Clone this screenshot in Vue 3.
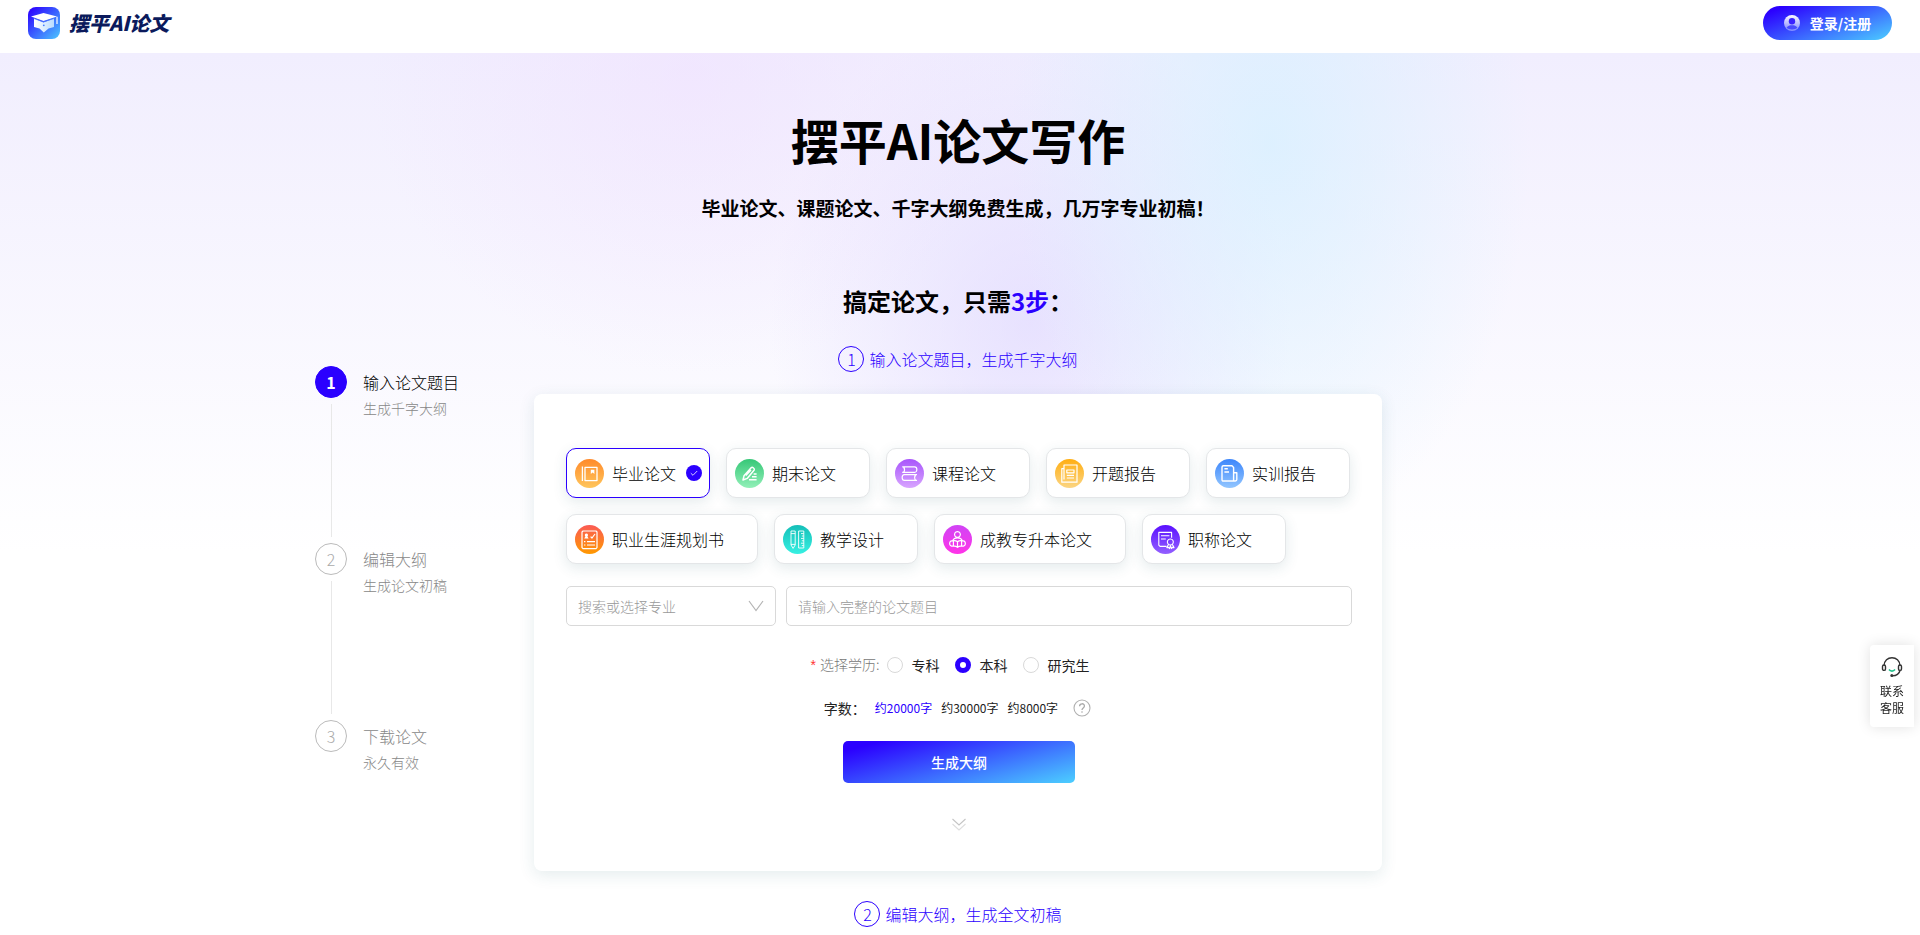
<template>
  <div class="page">
    <header class="header">
      <a class="logo" href="#">
        <svg class="logo-icon" viewBox="0 0 32 32" aria-hidden="true">
          <defs>
            <linearGradient id="logoBg" x1="0" y1="0" x2="1" y2="1">
              <stop offset="0.1" stop-color="#2d0bff" />
              <stop offset="1" stop-color="#4cc8ff" />
            </linearGradient>
            <linearGradient id="logoCap" x1="0" y1="0" x2="1" y2="0">
              <stop offset="0" stop-color="#fff" />
              <stop offset="1" stop-color="#b9dcff" />
            </linearGradient>
          </defs>
          <rect width="32" height="32" rx="8" fill="url(#logoBg)" />
          <path d="M6 11.5 L15.5 15.6 L26 11.5 V20 L20.5 21.6 L15.8 25.5 L11.5 21.6 L6 20 Z" fill="url(#logoCap)" />
          <path d="M3 9.6 L15.5 6 L29 9.6 L15.5 14 Z" fill="#fff" />
          <path d="M5.6 11.4 L15.5 14.8 L26.4 11.4" fill="none" stroke="#4a7dff" stroke-width="0.7" />
          <path d="M29 9.8 V17" stroke="#fff" stroke-width="1.2" />
          <circle cx="15.8" cy="18.3" r="0.9" fill="#3f7bff" />
        </svg>
        <span class="logo-text">摆平AI论文</span>
      </a>
      <button class="login" type="button">
        <svg width="16" height="16" viewBox="0 0 16 16" aria-hidden="true">
          <defs>
            <linearGradient id="userBg" x1="0" y1="0" x2="0" y2="1">
              <stop offset="0" stop-color="#fff" />
              <stop offset="1" stop-color="#fff" stop-opacity="0.35" />
            </linearGradient>
          </defs>
          <circle cx="8" cy="8" r="8" fill="url(#userBg)" />
          <circle cx="8" cy="6.3" r="3.2" fill="#3a22ff" />
          <path d="M2.6 12.8 C4 10.6 5.6 10.2 8 10.2 S12 10.6 13.4 12.8 C11 15 5 15 2.6 12.8 Z" fill="#4a4bff" />
        </svg>
        <span>登录/注册</span>
      </button>
    </header>

    <main class="main">
      <h1>摆平AI论文写作</h1>
      <p class="subtitle">毕业论文、课题论文、千字大纲免费生成，几万字专业初稿！</p>
      <h2>搞定论文，只需<span class="blue">3步</span>：</h2>

      <div class="columns">
        <ol class="steps">
          <li v-for="(step, index) in steps" :key="index" class="step" :class="{ active: index === 0 }">
            <div class="step-side">
              <span class="step-num">{{ index + 1 }}</span>
              <span v-if="index < steps.length - 1" class="step-line"></span>
            </div>
            <div>
              <div class="step-title">{{ step.title }}</div>
              <div class="step-desc">{{ step.desc }}</div>
            </div>
          </li>
        </ol>

        <div class="content">
          <h3><span class="num">1</span>输入论文题目，生成千字大纲</h3>

          <form class="card" @submit.prevent>
            <div class="types">
              <button
                v-for="(item, index) in types"
                :key="item.name"
                type="button"
                class="type"
                :class="{ selected: index === currentType }"
                @click="currentType = index"
              >
                <svg class="type-icon" viewBox="0 0 29 29" aria-hidden="true">
                  <defs>
                    <linearGradient :id="'type' + index" x1="0" y1="0" x2="0" y2="1">
                      <stop offset="0" :stop-color="item.from" />
                      <stop offset="1" :stop-color="item.to" />
                    </linearGradient>
                  </defs>
                  <circle cx="14.5" cy="14.5" r="14.5" :fill="'url(#type' + index + ')'" />
                  <path :d="item.path" fill="none" stroke="#fff" :stroke-width="item.stroke" stroke-linejoin="round" />
                  <path v-if="item.solid" :d="item.solid" fill="#fff" />
                </svg>
                <span>{{ item.name }}</span>
                <svg v-if="index === currentType" class="check" viewBox="0 0 16 16" aria-hidden="true">
                  <circle cx="8" cy="8" r="8" fill="#2b00ff" />
                  <path d="M4.8 8.2 L7 10.3 L11.2 6" fill="none" stroke="#fff" stroke-width="0.8" />
                </svg>
              </button>
            </div>

            <div class="fields">
              <div class="select-box">
                <select v-model="major" aria-label="专业">
                  <option value="">搜索或选择专业</option>
                </select>
                <svg class="arrow" viewBox="0 0 16 12" aria-hidden="true">
                  <path d="M1 1 L8 10.5 L15 1" fill="none" stroke="#b4b4b4" stroke-width="1.2" />
                </svg>
              </div>
              <input v-model="title" class="title-input" type="text" placeholder="请输入完整的论文题目" aria-label="论文题目">
            </div>

            <div class="degree" role="radiogroup" aria-labelledby="degree-label">
              <span id="degree-label" class="degree-label"><span class="star">*</span>选择学历:</span>
              <label v-for="item in degrees" :key="item" class="radio">
                <input v-model="degree" type="radio" name="degree" :value="item">
                <span>{{ item }}</span>
              </label>
            </div>

            <div class="words">
              <span class="words-label">字数：</span>
              <button
                v-for="item in words"
                :key="item"
                type="button"
                class="word"
                :class="{ blue: item === word }"
                @click="word = item"
              >{{ item }}</button>
              <button type="button" class="help" aria-label="帮助">
                <svg width="18" height="18" viewBox="0 0 18 18" aria-hidden="true">
                  <circle cx="9" cy="9" r="8" fill="none" stroke="#b0b0b0" stroke-width="1.1" />
                  <path d="M6.6 7.2 C6.6 4 11.4 4 11.4 7 C11.4 9 9 8.9 9 11" fill="none" stroke="#a8a8a8" stroke-width="1.3" />
                  <circle cx="9" cy="13" r="0.8" fill="#a8a8a8" />
                </svg>
              </button>
            </div>

            <button class="submit" type="submit">生成大纲</button>

            <svg class="more" viewBox="0 0 14 14" aria-hidden="true">
              <path d="M0.5 1 L7 7 L13.5 1" fill="none" stroke="#c4c4c4" stroke-width="1.1" />
              <path d="M0.5 6 L7 12 L13.5 6" fill="none" stroke="#dedede" stroke-width="1.1" />
            </svg>
          </form>

          <h3><span class="num">2</span>编辑大纲，生成全文初稿</h3>
        </div>
      </div>
    </main>

    <a class="service" href="#">
      <svg width="22" height="22" viewBox="0 0 22 22" fill="none" aria-hidden="true">
        <path d="M3 10 C3 -1 19 -1 19 10" stroke="#333" stroke-width="1.4" />
        <rect x="1.5" y="9" width="3" height="5.4" rx="1.5" stroke="#333" stroke-width="1.4" />
        <rect x="17.5" y="9" width="3" height="5.4" rx="1.5" stroke="#333" stroke-width="1.4" />
        <path d="M19 14.5 C18 18.5 15 19.8 11.5 19.8" stroke="#333" stroke-width="1.4" />
        <circle cx="10.8" cy="19.6" r="1.5" fill="#333" />
        <path d="M8 13.6 C9.5 15.6 12.5 15.6 14 13.6" stroke="#1fc08a" stroke-width="1.6" />
      </svg>
      <span>联系<br>客服</span>
    </a>
  </div>
</template>

<script setup>
import { ref } from 'vue'

const currentType = ref(0)
const major = ref('')
const title = ref('')
const degree = ref('本科')
const word = ref('约20000字')

const degrees = ['专科', '本科', '研究生']
const words = ['约20000字', '约30000字', '约8000字']

const steps = [
  { title: '输入论文题目', desc: '生成千字大纲' },
  { title: '编辑大纲', desc: '生成论文初稿' },
  { title: '下载论文', desc: '永久有效' }
]

// path = outline strokes, solid = filled parts, both in a 29x29 box
const types = [
  {
    name: '毕业论文', from: '#ff8a2b', to: '#ffc65c', stroke: 1.3,
    path: 'M7.4 7.6 V22 M10 8.4 H22 V21.6 H10 Z',
    solid: 'M15.8 10.8 H19.4 V15 L17.6 13.4 L15.8 15 Z'
  },
  {
    name: '期末论文', from: '#36c777', to: '#92f0b8', stroke: 1.5,
    path: 'M8 21 L9 16.8 L16.4 8.6 C17.4 7.6 20 9.8 19.2 11 L12.2 19.4 Z M10.8 16.6 L16 11 M14 20.8 H21.6 M17 17.8 H21.6 M18.6 15 H21.6'
  },
  {
    name: '课程论文', from: '#a855fb', to: '#d8a5ff', stroke: 1.2,
    path: 'M7.2 7.8 H19.6 C22.6 7.8 22.6 13.4 19.6 13.4 H7.2 M8.6 7.8 C9.8 9.6 9.8 11.6 8.6 13.4 M22 15.6 H9.4 C6.4 15.6 6.4 21.4 9.4 21.4 H22 M20.6 15.6 C19.4 17.4 19.4 19.6 20.6 21.4'
  },
  {
    name: '开题报告', from: '#ffae12', to: '#fbd583', stroke: 1.2,
    path: 'M9 6 H22 V23.2 H6.8 V9.6 H9 Z M9 9.6 V20.6 M11.8 11 H19 V13.8 H11.8 Z M11.8 16.4 H19 M11.8 19 H19'
  },
  {
    name: '实训报告', from: '#3d86fb', to: '#92c6ff', stroke: 1.4,
    path: 'M8.4 6.8 H17 L18.6 8.4 V22 H8.4 C7.4 22 7 21.6 7 20.6 V8.2 C7 7.2 7.4 6.8 8.4 6.8 Z M18.6 13.8 H21.8 V20.6 C21.8 21.6 21.4 22 20.4 22 H18.6 M9.4 9.8 H12.8 M9.4 13 H14'
  },
  {
    name: '职业生涯规划书', from: '#fb5a55', to: '#ff9a00', stroke: 1.2,
    path: 'M8 6 H21 L22 7 V22.6 L21 23.6 H8 L7 22.6 V7 Z M15.6 11.6 L17 13 L20 9 M12 16.6 H20 M12 20 H20 M9 16.6 H10.4 M9 20 H10.4',
    solid: 'M11.4 8.4 A1.7 1.7 0 0 1 12.4 11.4 L13.6 13.4 H9.2 L10.4 11.4 A1.7 1.7 0 0 1 11.4 8.4 Z'
  },
  {
    name: '教学设计', from: '#15bfb8', to: '#37f0e2', stroke: 0.9,
    path: 'M8 6 H12.2 V20 L10.1 23.4 L8 20 Z M8 8.6 H12.2 M8 19.4 H12.2 M15.6 6 H20.8 V23 H15.6 Z M18 8.6 H20.8 M18.8 11 H20.8 M18 13.4 H20.8 M18.8 15.8 H20.8 M18 18.2 H20.8 M18.8 20.6 H20.8'
  },
  {
    name: '成教专升本论文', from: '#d044f5', to: '#ff33e8', stroke: 1.2,
    path: 'M14.5 6.6 A2.9 2.9 0 1 1 14.4 6.6 Z M9.8 15.4 C10.6 13.4 12.4 12.8 14.5 12.8 S18.4 13.4 19.2 15.4 M14.5 16.8 V22.4 M10.4 15.6 C12 15.4 13.6 16 14.5 16.8 C15.4 16 17 15.4 18.6 15.6 V21.2 C17 21 15.4 21.6 14.5 22.4 C13.6 21.6 12 21 10.4 21.2 Z M10.4 15.6 C5.4 15.6 5.4 21.2 10.4 21.2 M18.6 15.6 C23.6 15.6 23.6 21.2 18.6 21.2'
  },
  {
    name: '职称论文', from: '#5a10ff', to: '#9360ff', stroke: 1.1,
    path: 'M15.4 21.4 H9 L7.8 20.2 V7.4 H20.6 V12.8 M10 10.8 H18.4 M10 14 H14.8 M19.4 14 A3 3 0 1 1 19.3 14 Z M17.4 19.4 L15.8 22.6 L17.8 22.4 L18.6 23.6 L19.4 20.6 L20.4 23.6 L21.2 22.4 L23 22.6 L21.4 19.4'
  }
]
</script>

<style>
body {
  margin: 0;
}
</style>

<style scoped>
* {
  box-sizing: border-box;
}
.page {
  font-family: "Noto Sans CJK SC", "Noto Sans", sans-serif;
  font-size: 14px;
  color: #222;
  min-height: 100vh;
  background: #fff;
}
button, input, select {
  font-family: inherit;
  margin: 0;
}
button {
  cursor: pointer;
}
.blue {
  color: #2b00ff;
}

/* header */
.header {
  height: 53px;
  padding: 6px 28px 13px;
  display: flex;
  justify-content: space-between;
  align-items: center;
}
.logo {
  display: flex;
  align-items: center;
  gap: 9px;
  text-decoration: none;
}
.logo-icon {
  width: 32px;
  height: 32px;
}
.logo-text {
  font-size: 20px;
  line-height: 32px;
  font-weight: 900;
  font-style: italic;
  color: #0b1a5c;
}
.login {
  width: 129px;
  height: 34px;
  border: none;
  border-radius: 17px;
  background: linear-gradient(160deg, #2b00ff 10%, #4ccfff 100%);
  color: #fff;
  font-size: 14px;
  font-weight: bold;
  display: flex;
  align-items: center;
  justify-content: center;
  gap: 10px;
}

/* main */
.main {
  padding: 52px 4px 0 0;
  background:
    radial-gradient(320px 300px at 690px 20px, rgba(240, 224, 255, 0.55), rgba(240, 224, 255, 0)),
    radial-gradient(260px 400px at 1270px 90px, rgba(214, 240, 255, 0.75), rgba(214, 240, 255, 0)),
    radial-gradient(260px 320px at 1030px 270px, rgba(222, 214, 255, 0.65), rgba(222, 214, 255, 0)),
    linear-gradient(180deg, #f1eefe 0, #fff 500px);
  text-align: center;
}
h1 {
  margin: 0;
  font-size: 48px;
  line-height: 68px;
  color: #000;
}
.subtitle {
  margin: 21px 0 0;
  font-size: 19px;
  line-height: 28px;
  font-weight: bold;
  color: #000;
}
h2 {
  margin: 62px 0 0;
  font-size: 24px;
  line-height: 34px;
  color: #000;
}
h3 {
  margin: 0;
  display: flex;
  align-items: center;
  justify-content: center;
  gap: 5px;
  font-size: 16px;
  line-height: 26px;
  font-weight: 300;
  color: #2b00ff;
}
.num {
  width: 26px;
  height: 26px;
  line-height: 24px;
  border: 1px solid #2b00ff;
  border-radius: 50%;
}
.columns {
  margin-top: 28px;
  display: grid;
  grid-template-columns: 1fr minmax(0, 848px) 1fr;
}

/* left steps */
.steps {
  list-style: none;
  margin: 20px 0 0;
  padding: 0;
  width: 219px;
  justify-self: end;
  text-align: left;
}
.step {
  display: flex;
  gap: 16px;
  height: 177px;
  color: #888;
}
.step-side {
  display: flex;
  flex-direction: column;
  align-items: center;
}
.step-num {
  width: 32px;
  height: 32px;
  border: 1px solid #bbb;
  border-radius: 50%;
  font-size: 16px;
  line-height: 30px;
  font-weight: 300;
  text-align: center;
  color: #aaa;
}
.step-line {
  flex: 1;
  width: 1px;
  margin: 6px 0;
  background: #e8e8e8;
}
.step-title {
  font-size: 16px;
  line-height: 32px;
  font-weight: 300;
}
.step-desc {
  font-size: 14px;
  line-height: 20px;
  font-weight: 300;
}
.active .step-num {
  background: #2b00ff;
  border-color: #2b00ff;
  color: #fff;
  font-weight: bold;
}
.active .step-title {
  color: #000;
}

/* card */
.card {
  margin: 22px 0 30px;
  padding: 54px 30px 39px 32px;
  background: #fff;
  border-radius: 8px;
  box-shadow: 0 4px 16px rgba(30, 100, 110, 0.12);
  display: flex;
  flex-direction: column;
  align-items: center;
}
.types {
  width: 100%;
  display: flex;
  flex-wrap: wrap;
  gap: 16px;
}
.type {
  position: relative;
  height: 50px;
  padding: 0 33px 0 8px;
  border: 1px solid #e4e6e8;
  border-radius: 10px;
  background: #fff;
  box-shadow: 0 4px 14px rgba(30, 90, 100, 0.12);
  display: flex;
  align-items: center;
  gap: 8px;
  font-size: 16px;
  font-weight: 300;
  color: #000;
}
.type.selected {
  border-color: #2b00ff;
}
.type-icon {
  width: 29px;
  height: 29px;
}
.check {
  position: absolute;
  right: 7px;
  width: 16px;
  height: 16px;
}
.fields {
  width: 100%;
  margin-top: 22px;
  display: flex;
  gap: 10px;
}
.select-box {
  position: relative;
  flex: 0 0 210px;
}
select, .title-input {
  width: 100%;
  height: 40px;
  padding: 0 11px;
  border: 1px solid #d9d9d9;
  border-radius: 5px;
  background: #fff;
  font-size: 14px;
  font-weight: 300;
  color: #999;
}
select {
  appearance: none;
}
.title-input {
  flex: 1;
  min-width: 0;
  color: #222;
}
.title-input::placeholder {
  color: #999;
}
.arrow {
  position: absolute;
  right: 12px;
  top: 14px;
  width: 16px;
  height: 12px;
  pointer-events: none;
}
.degree {
  margin-top: 26px;
  padding-right: 18px;
  display: flex;
  align-items: center;
  gap: 16px;
  line-height: 24px;
}
.degree-label {
  margin-right: -8px;
  font-weight: 300;
  color: #777;
}
.star {
  margin-right: 4px;
  font-family: "Liberation Sans", sans-serif;
  font-weight: 400;
  color: #f33;
}
.radio {
  display: flex;
  align-items: center;
  gap: 8px;
}
.radio input {
  appearance: none;
  width: 16px;
  height: 16px;
  border: 1px solid #d9d9d9;
  border-radius: 50%;
  background: #fff;
}
.radio input:checked {
  border: 5px solid #2b00ff;
}
.words {
  margin-top: 20px;
  padding-right: 3px;
  display: flex;
  align-items: center;
  gap: 9px;
  line-height: 22px;
}
.word {
  padding: 0;
  border: none;
  background: none;
  font-size: 12px;
  line-height: 22px;
}
.word:not(.blue) {
  color: #222;
}
.help {
  margin-left: 6px;
  padding: 0;
  border: none;
  background: none;
  height: 18px;
  line-height: 0;
}
.submit {
  width: 232px;
  height: 42px;
  margin-top: 22px;
  border: none;
  border-radius: 5px;
  background: linear-gradient(165deg, #2b00ff 10%, #4ccfff 100%);
  color: #fff;
  font-size: 14px;
  font-weight: 500;
}
.more {
  width: 14px;
  height: 14px;
  margin-top: 35px;
}

/* floating contact entry */
.service {
  position: fixed;
  right: 6px;
  top: 645px;
  width: 44px;
  padding: 11px 0;
  border-radius: 4px 0 0 4px;
  background: #fff;
  box-shadow: 0 0 14px rgba(0, 0, 0, 0.12);
  display: flex;
  flex-direction: column;
  align-items: center;
  gap: 4px;
  font-size: 12px;
  line-height: 17px;
  color: #222;
  text-decoration: none;
}
</style>
